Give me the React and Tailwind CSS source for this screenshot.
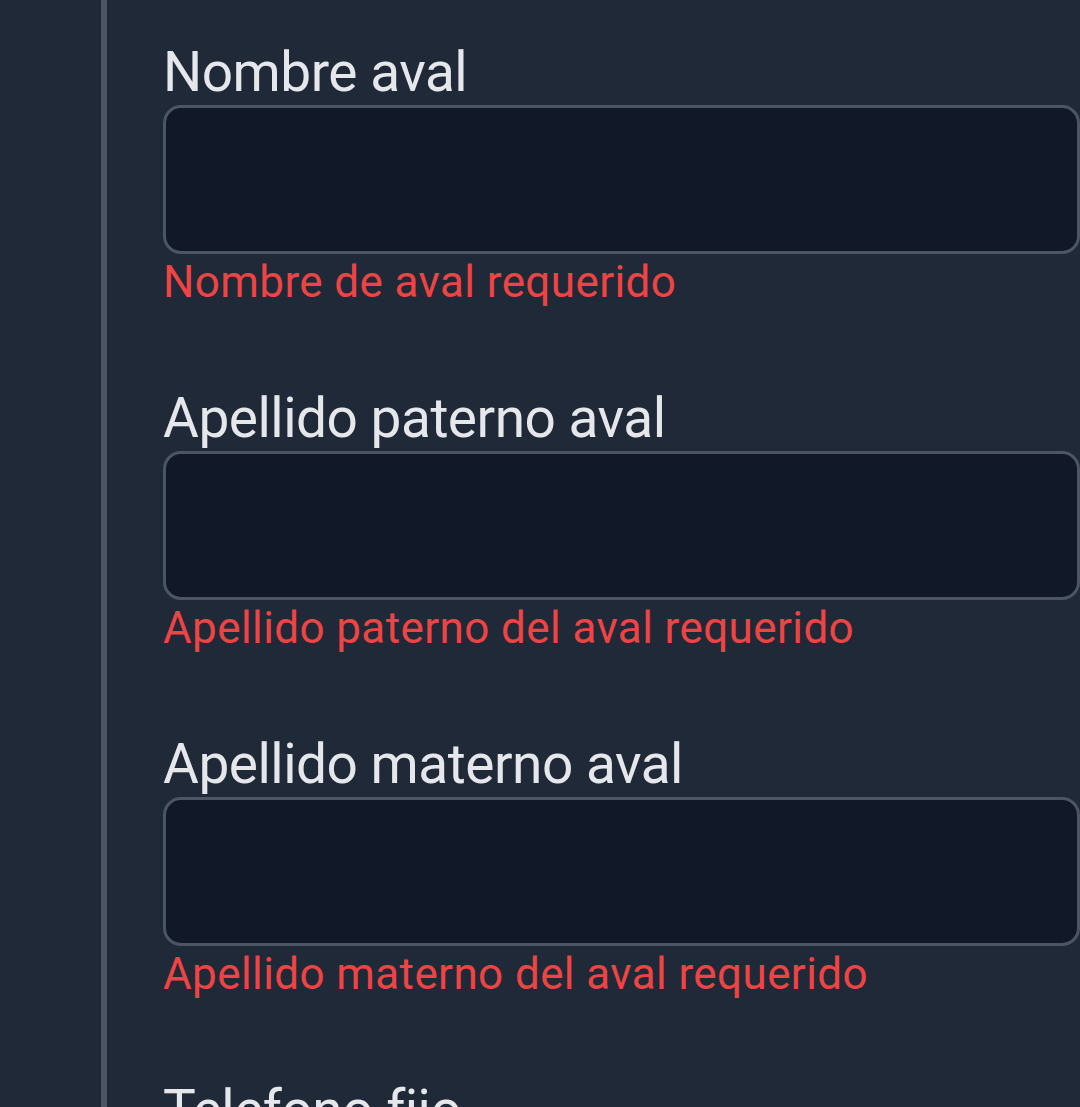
import React from "react";

const fields = [
  { label: "Nombre aval", error: "Nombre de aval requerido" },
  { label: "Apellido paterno aval", error: "Apellido paterno del aval requerido" },
  { label: "Apellido materno aval", error: "Apellido materno del aval requerido" },
  { label: "Telefono fijo", error: "" },
];

const App = () => {
  return (
    <div
      className="h-[1107px] w-full overflow-hidden bg-[#1f2937] flex"
      style={{ fontFamily: "Roboto, 'Noto Sans', sans-serif" }}
    >
      <div className="w-[101px] shrink-0" />
      <div className="flex-1 border-l-[6px] border-[#4b5563] pl-[56px] pt-[39px] min-w-0">
        {fields.map((f, i) => (
          <div key={i} className="mb-[78px]">
            <label className="block text-[55px] leading-[66px] tracking-[-0.5px] text-[#e5e7eb]">
              {f.label}
            </label>
            <input
              type="text"
              className="block w-full h-[149px] bg-[#111827] border-[3px] border-[#4b5563] rounded-[18px] px-6 text-[55px] text-[#e5e7eb] focus:outline-none"
            />
            {f.error && (
              <p className="mt-[3px] text-[44px] leading-[50px] tracking-[0.4px] text-[#ef4444]">
                {f.error}
              </p>
            )}
          </div>
        ))}
      </div>
    </div>
  );
};

export default App;
